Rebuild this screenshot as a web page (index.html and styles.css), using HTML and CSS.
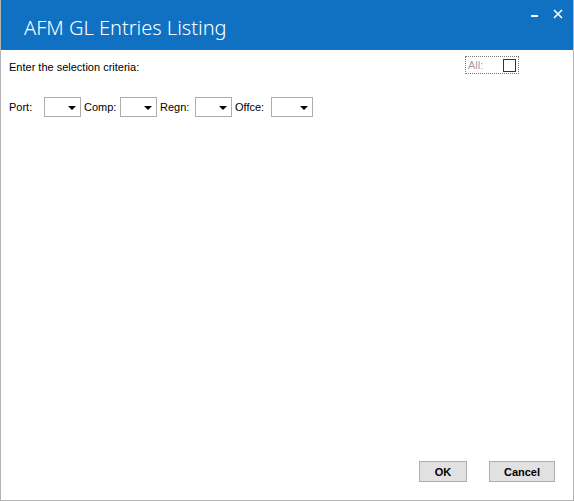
FILE: index.html
```html
<!DOCTYPE html>
<html>
<head>
<meta charset="utf-8">
<link rel="stylesheet" href="styles.css">
</head>
<body>
<div class="window">
  <div class="titlebar">
    <div class="title">AFM GL Entries Listing</div>
    <div class="controls">
      <span class="min"></span>
      <svg class="close" width="10" height="10" viewBox="0 0 10 10"><path d="M1 1 L9 9 M9 1 L1 9" stroke="#fff" stroke-width="1.6" fill="none"/></svg>
    </div>
  </div>
  <div class="content">
    <div class="header-row">
      <div class="prompt">Enter the selection criteria:</div>
      <label class="all-box"><span class="all-label">All:</span><span class="check"></span></label>
    </div>
    <div class="filters">
      <span class="lbl lbl-port">Port:</span><span class="combo"><span class="arrow"></span></span>
      <span class="lbl lbl-comp">Comp:</span><span class="combo"><span class="arrow"></span></span>
      <span class="lbl lbl-regn">Regn:</span><span class="combo"><span class="arrow"></span></span>
      <span class="lbl lbl-offc">Offce:</span><span class="combo combo-wide"><span class="arrow"></span></span>
    </div>
    <div class="spacer"></div>
    <div class="footer">
      <button class="btn btn-ok">OK</button>
      <button class="btn btn-cancel">Cancel</button>
    </div>
  </div>
</div>
</body>
</html>
```
FILE: styles.css
```css
html, body { margin: 0; padding: 0; background: #fff; }
.window {
  width: 574px; height: 501px; box-sizing: border-box;
  border: 1px solid #b4b4b4; border-top: none;
  display: flex; flex-direction: column;
  font-family: "Liberation Sans", Arial, sans-serif; font-size: 11px; color: #000;
  overflow: hidden;
}
.titlebar {
  height: 50px; flex: none; background: #1071c3;
  display: flex; align-items: flex-start; margin: 0 -1px;
}
.title {
  font-family: "Noto Sans", "Open Sans", sans-serif; font-size: 20px; font-weight: 300; color: #fff;
  padding-left: 24px; padding-top: 14px; line-height: 28px; letter-spacing: 0;
}
.controls { margin-left: auto; display: flex; align-items: flex-start; padding-top: 9px; padding-right: 11px; }
.min { display: block; width: 7px; height: 2px; background: #fff; margin-top: 6px; margin-right: 15px; }
.close { display: block; }
.content { flex: 1; display: flex; flex-direction: column; padding: 0 18px 18px 8px; }
.header-row { display: flex; justify-content: space-between; align-items: flex-start; padding-top: 6px; }
.prompt { padding-top: 5px; line-height: 13px; }
.all-box {
  width: 54px; height: 18px; box-sizing: border-box; border: 1px dotted #777;
  display: flex; align-items: center; justify-content: space-between; padding: 0 2px 0 2px;
  margin-right: 36px;
}
.all-label { color: #a0a0a0; }
.check { width: 13px; height: 13px; box-sizing: border-box; border: 1px solid #333; background: #fff; }
.filters { display: flex; align-items: center; margin-top: 23px; height: 20px; }
.lbl { flex: none; }
.lbl-port { width: 35px; }
.lbl-comp { width: 36px; }
.lbl-regn { width: 35px; }
.lbl-offc { width: 36px; }
.combo {
  flex: none; width: 37px; height: 20px; box-sizing: border-box; border: 1px solid #adadad; background: #fff;
  position: relative; margin-right: 3px; display: block;
}
.combo-wide { width: 42px; }
.arrow {
  position: absolute; right: 4px; top: 8px; width: 0; height: 0;
  border-left: 4px solid transparent; border-right: 4px solid transparent; border-top: 4px solid #000;
}
.spacer { flex: 1; }
.footer { display: flex; justify-content: flex-end; gap: 22px; }
.btn {
  height: 21px; box-sizing: border-box; border: 1px solid #adadad; background: #e1e1e1;
  font-family: "Liberation Sans", Arial, sans-serif; font-size: 11px; font-weight: bold; color: #000;
  padding: 0; margin: 0;
}
.btn-ok { width: 48px; }
.btn-cancel { width: 66px; }
```
